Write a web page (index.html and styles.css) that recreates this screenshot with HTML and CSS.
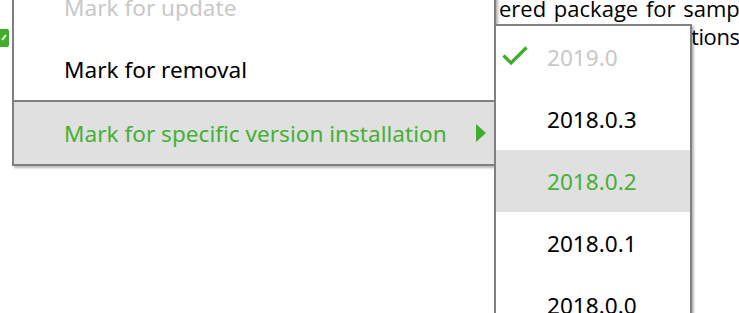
FILE: index.html
```html
<!DOCTYPE html>
<html>
<head>
<meta charset="utf-8">
<link rel="stylesheet" href="styles.css">
</head>
<body>
<div class="page">
  <div class="bg-row">
    <span class="checkbox"><svg width="18" height="18" viewBox="0 0 18 18"><path d="M11 11 L15 6" stroke="#fff" stroke-width="2" fill="none"/></svg></span>
  </div>
  <div class="bg-text">
    <p>ered package for samp</p>
    <p class="line2">tions</p>
  </div>

  <div class="menu main-menu">
    <div class="item disabled">Mark for update</div>
    <div class="item">Mark for removal</div>
    <div class="sep"></div>
    <div class="item active">Mark for specific version installation
      <svg class="arrow" width="10" height="18" viewBox="0 0 10 18"><path d="M0 0 L10 9 L0 18 Z" fill="#3fae2a"/></svg>
    </div>
  </div>

  <div class="menu sub-menu">
    <div class="item disabled"><svg class="check" width="26" height="20" viewBox="0 0 26 20"><path d="M1.5 9.5 L9 17 L24.5 1.5" stroke="#3fae2a" stroke-width="3.2" fill="none"/></svg>2019.0</div>
    <div class="item">2018.0.3</div>
    <div class="item active">2018.0.2</div>
    <div class="item">2018.0.1</div>
    <div class="item">2018.0.0</div>
  </div>
</div>
</body>
</html>
```

FILE: styles.css
```css
html, body {
  margin: 0;
  padding: 0;
  background: #fff;
  overflow: hidden;
}
body {
  width: 739px;
  height: 313px;
  font-family: "Noto Sans", "Open Sans", sans-serif;
}
.page {
  position: relative;
  width: 739px;
  height: 313px;
  overflow: hidden;
}
.bg-row {
  position: absolute;
  left: -9px;
  top: 29px;
}
.checkbox {
  display: block;
  width: 18px;
  height: 18px;
  background: #3fae2a;
  border-radius: 2px;
}
.checkbox svg { display: block; }
.bg-text {
  position: absolute;
  top: -6px;
  left: 499px;
  font-family: "Open Sans", "Noto Sans", sans-serif;
  font-size: 22px;
  word-spacing: 2px;
  color: #000;
  white-space: nowrap;
}
.bg-text p {
  margin: 0;
  line-height: 28px;
}
.bg-text .line2 {
  padding-left: 192px;
  letter-spacing: -0.4px;
}
.menu {
  position: absolute;
  background: #fff;
  border: 2px solid #808080;
  box-shadow: 2px 2px 2px rgba(0, 0, 0, 0.28);
  font-family: "Noto Sans", sans-serif;
  font-size: 22.6px;
  color: #000;
}
.main-menu {
  left: 12px;
  top: -26px;
  width: 480px;
}
.sub-menu {
  left: 494px;
  top: 24px;
  width: 194px;
}
.item {
  position: relative;
  height: 62px;
  display: flex;
  align-items: center;
  white-space: nowrap;
}
.main-menu .item { padding-left: 50px; }
.sub-menu .item { padding-left: 51px; }
.item.disabled { color: #c8c8c8; }
.item.active {
  background: #e0e0e0;
  color: #45b035;
}
.sep {
  height: 2px;
  background: #808080;
}
.arrow {
  position: absolute;
  left: 462px;
  top: 22px;
}
.check {
  position: absolute;
  left: 6px;
  top: 20px;
}
```
